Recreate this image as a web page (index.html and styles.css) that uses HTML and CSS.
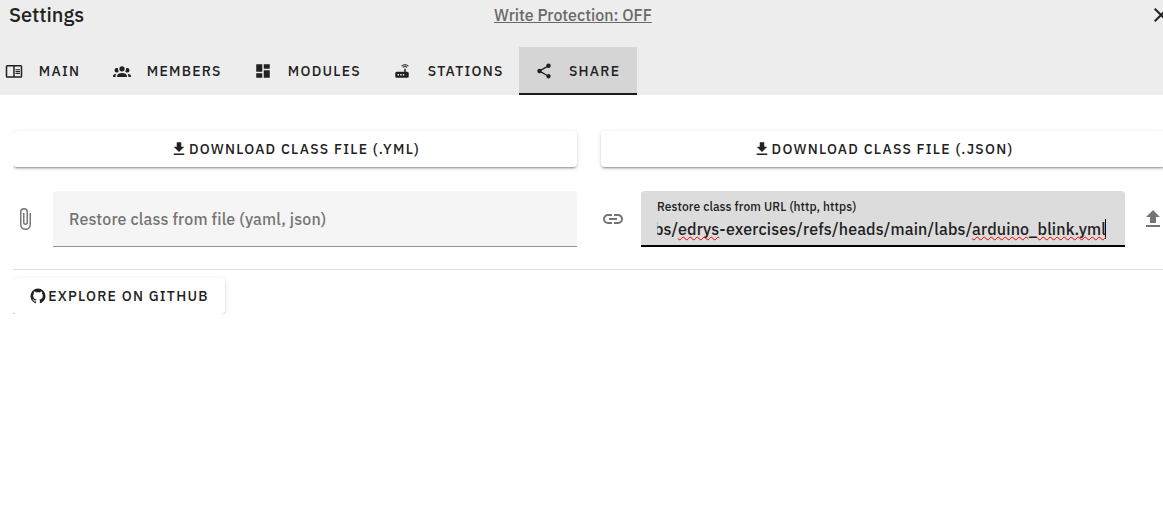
FILE: index.html
```html
<!DOCTYPE html>
<html lang="en">
<head>
<meta charset="utf-8">
<title>Settings</title>
<link rel="stylesheet" href="styles.css">
</head>
<body>
<header class="header">
  <div class="titlebar">
    <h1 class="title">Settings</h1>
    <a class="protection">Write Protection: OFF</a>
    <svg class="icon close" viewBox="0 0 24 24"><path d="M19,6.41L17.59,5L12,10.59L6.41,5L5,6.41L10.59,12L5,17.59L6.41,19L12,13.41L17.59,19L19,17.59L13.41,12L19,6.41Z"/></svg>
  </div>
  <nav class="tabs">
    <div class="tab tab-main"><svg class="icon small" viewBox="0 0 24 24"><path fill-rule="evenodd" d="M21,4H3A2,2 0 0,0 1,6V19A2,2 0 0,0 3,21H21A2,2 0 0,0 23,19V6A2,2 0 0,0 21,4M3,6H11V19H3ZM13,6H21V19H13ZM14,9.5H20V11H14ZM14,12H20V13.5H14ZM14,14.5H20V16H14Z"/></svg><span>MAIN</span></div>
    <div class="tab tab-members"><svg class="icon small" viewBox="0 0 24 24"><path d="M12,5.5A3.5,3.5 0 0,1 15.5,9A3.5,3.5 0 0,1 12,12.5A3.5,3.5 0 0,1 8.5,9A3.5,3.5 0 0,1 12,5.5M5,8C5.56,8 6.08,8.15 6.53,8.42C6.38,9.85 6.8,11.27 7.66,12.38C7.16,13.34 6.16,14 5,14A3,3 0 0,1 2,11A3,3 0 0,1 5,8M19,8A3,3 0 0,1 22,11A3,3 0 0,1 19,14C17.84,14 16.84,13.34 16.34,12.38C17.2,11.27 17.62,9.85 17.47,8.42C17.92,8.15 18.44,8 19,8M5.5,18.25C5.5,16.18 8.41,14.5 12,14.5C15.59,14.5 18.5,16.18 18.5,18.25V20H5.5V18.25M0,20V18.5C0,17.11 1.89,15.94 4.45,15.6C3.86,16.28 3.5,17.22 3.5,18.25V20H0M24,20H20.5V18.25C20.5,17.22 20.14,16.28 19.55,15.6C22.11,15.94 24,17.11 24,18.5V20Z"/></svg><span>MEMBERS</span></div>
    <div class="tab tab-modules"><svg class="icon small" viewBox="0 0 24 24"><path d="M13,3V9H21V3M13,21H21V11H13M3,21H11V15H3M3,13H11V3H3V13Z"/></svg><span>MODULES</span></div>
    <div class="tab tab-stations"><svg class="icon small" viewBox="0 0 24 24"><path d="M20.2,5.9L21,5.1C19.6,3.7 17.8,3 16,3C14.2,3 12.4,3.7 11,5.1L11.8,5.9C13,4.8 14.5,4.2 16,4.2C17.5,4.2 19,4.8 20.2,5.9M19.3,6.7C18.4,5.8 17.2,5.3 16,5.3C14.8,5.3 13.6,5.8 12.7,6.7L13.5,7.5C14.2,6.8 15.1,6.5 16,6.5C16.9,6.5 17.8,6.8 18.5,7.5L19.3,6.7M19,13H17V9H15V13H5A2,2 0 0,0 3,15V19A2,2 0 0,0 5,21H19A2,2 0 0,0 21,19V15A2,2 0 0,0 19,13M8,18H6V16H8V18M11.5,18H9.5V16H11.5V18M15,18H13V16H15V18Z"/></svg><span>STATIONS</span></div>
    <div class="tab tab-share active"><svg class="icon small" viewBox="0 0 24 24"><path d="M18,16.08C17.24,16.08 16.56,16.38 16.04,16.85L8.91,12.7C8.96,12.47 9,12.24 9,12C9,11.76 8.96,11.53 8.91,11.3L15.96,7.19C16.5,7.69 17.21,8 18,8A3,3 0 0,0 21,5A3,3 0 0,0 18,2A3,3 0 0,0 15,5C15,5.24 15.04,5.47 15.09,5.7L8.04,9.81C7.5,9.31 6.79,9 6,9A3,3 0 0,0 3,12A3,3 0 0,0 6,15C6.79,15 7.5,14.69 8.04,14.19L15.16,18.34C15.11,18.55 15.08,18.77 15.08,19C15.08,20.61 16.39,21.91 18,21.91C19.61,21.91 20.92,20.61 20.92,19A2.92,2.92 0 0,0 18,16.08Z"/></svg><span>SHARE</span></div>
  </nav>
</header>
<main class="content">
  <div class="row downloads">
    <button class="btn"><svg class="icon small" viewBox="0 0 24 24"><path d="M5,20H19V18H5M19,9H15V3H9V9H5L12,16L19,9Z"/></svg><span>DOWNLOAD CLASS FILE (.YML)</span></button>
    <button class="btn"><svg class="icon small" viewBox="0 0 24 24"><path d="M5,20H19V18H5M19,9H15V3H9V9H5L12,16L19,9Z"/></svg><span>DOWNLOAD CLASS FILE (.JSON)</span></button>
  </div>
  <div class="row restore">
    <div class="source">
      <svg class="icon muted" viewBox="0 0 24 24"><path d="M16.5,6V17.5A4,4 0 0,1 12.5,21.5A4,4 0 0,1 8.5,17.5V5A2.5,2.5 0 0,1 11,2.5A2.5,2.5 0 0,1 13.5,5V15.5A1,1 0 0,1 12.5,16.5A1,1 0 0,1 11.5,15.5V6H10V15.5A2.5,2.5 0 0,0 12.5,18A2.5,2.5 0 0,0 15,15.5V5A4,4 0 0,0 11,1A4,4 0 0,0 7,5V17.5A5.5,5.5 0 0,0 12.5,23A5.5,5.5 0 0,0 18,17.5V6H16.5Z"/></svg>
      <div class="field"><span class="placeholder">Restore class from file (yaml, json)</span></div>
    </div>
    <div class="source">
      <svg class="icon muted" viewBox="0 0 24 24"><path d="M3.9,12C3.9,10.29 5.29,8.9 7,8.9H11V7H7A5,5 0 0,0 2,12A5,5 0 0,0 7,17H11V15.1H7C5.29,15.1 3.9,13.71 3.9,12M8,13H16V11H8V13M17,7H13V8.9H17C18.71,8.9 20.1,10.29 20.1,12C20.1,13.71 18.71,15.1 17,15.1H13V17H17A5,5 0 0,0 22,12A5,5 0 0,0 17,7Z"/></svg>
      <div class="field focused">
        <span class="label">Restore class from URL (http, https)</span>
        <div class="value"><span class="url">bs/<span class="typo">edrys</span>-exercises/refs/heads/main/labs/<span class="typo">arduino</span>_<span class="typo">blink.yml</span></span></div>
      </div>
      <svg class="icon muted" viewBox="0 0 24 24"><path d="M9,16V10H5L12,3L19,10H15V16H9M5,20V18H19V20H5Z"/></svg>
    </div>
  </div>
  <hr class="divider">
  <button class="btn github"><svg class="icon small" viewBox="0 0 24 24"><path d="M12,2A10,10 0 0,0 2,12C2,16.42 4.87,20.17 8.84,21.5C9.34,21.58 9.5,21.27 9.5,21C9.5,20.77 9.5,20.14 9.5,19.31C6.73,19.91 6.14,17.97 6.14,17.97C5.68,16.81 5.03,16.5 5.03,16.5C4.12,15.88 5.1,15.9 5.1,15.9C6.1,15.97 6.63,16.93 6.63,16.93C7.5,18.45 8.97,18 9.54,17.76C9.63,17.11 9.89,16.67 10.17,16.42C7.95,16.17 5.62,15.31 5.62,11.5C5.62,10.39 6,9.5 6.65,8.79C6.55,8.54 6.2,7.5 6.75,6.15C6.75,6.15 7.59,5.88 9.5,7.17C10.29,6.95 11.15,6.84 12,6.84C12.85,6.84 13.71,6.95 14.5,7.17C16.41,5.88 17.25,6.15 17.25,6.15C17.8,7.5 17.45,8.54 17.35,8.79C18,9.5 18.38,10.39 18.38,11.5C18.38,15.32 16.04,16.16 13.81,16.41C14.17,16.72 14.5,17.33 14.5,18.26C14.5,19.6 14.5,20.68 14.5,21C14.5,21.27 14.66,21.59 15.17,21.5C19.14,20.16 22,16.42 22,12A10,10 0 0,0 12,2Z"/></svg><span>EXPLORE ON GITHUB</span></button>
</main>
</body>
</html>
```
FILE: styles.css
```css
* { box-sizing: border-box; }
body {
  margin: 0;
  height: 524px;
  overflow: hidden;
  background: #fff;
  color: #212121;
  font-family: "IBM Plex Sans", Roboto, sans-serif;
  font-weight: 500;
}
.icon { width: 24px; height: 24px; flex: none; fill: currentColor; }
.small { width: 18px; height: 18px; }
.muted { color: #757575; margin-top: 16px; }
.header { height: 95px; background: #ededed; overflow: hidden; }
.titlebar {
  display: grid;
  grid-template-columns: 485px 655px 24px;
  height: 47px;
  padding-left: 9px;
  align-items: start;
}
.title { margin: 0; font-size: 20px; line-height: 30px; font-weight: 500; }
.protection { font-size: 16px; line-height: 31px; color: #696969; text-decoration: underline; white-space: nowrap; }
.close { margin-top: 3px; }
.tabs { display: flex; height: 48px; margin-left: -12px; }
.tab {
  display: flex;
  flex: none;
  align-items: center;
  gap: 16px;
  padding-left: 16px;
  font-size: 14px;
  letter-spacing: 1.25px;
}
.tab-main { width: 108.8px; padding-left: 16.8px; }
.tab-members { width: 141px; }
.tab-modules { width: 140px; }
.tab-stations { width: 141.2px; padding-left: 15.6px; gap: 16.4px; }
.tab-share { width: 118px; }
.active { background: #d5d5d5; box-shadow: inset 0 -2px #1a1a1a; }
.content { margin-left: 13px; padding-top: 30px; height: 219px; overflow: hidden; }
.row { display: grid; grid-template-columns: 564px 564px; gap: 24px; }
.downloads { padding-top: 6px; }
.btn {
  display: flex;
  align-items: center;
  justify-content: center;
  gap: 1px;
  height: 36px;
  padding: 0;
  border: 0;
  border-radius: 4px;
  background: #fff;
  color: #212121;
  font: inherit;
  font-size: 14px;
  letter-spacing: 1.25px;
  white-space: nowrap;
  box-shadow: 0 3px 1px -2px rgba(0,0,0,.2), 0 2px 2px rgba(0,0,0,.14), 0 1px 5px rgba(0,0,0,.12);
}
.restore { margin-top: 24px; }
.source { display: flex; gap: 16px; }
.field {
  flex: 1;
  height: 56px;
  padding: 0 16px;
  border-radius: 4px 4px 0 0;
  border-bottom: 1px solid #959595;
  background: #f5f5f5;
  min-width: 0;
  letter-spacing: 0.15px;
}
.placeholder { color: #757575; font-size: 16px; line-height: 56px; white-space: nowrap; }
.focused { flex: 0 0 484px; background: #dcdcdc; border-bottom: 2px solid #000; padding-top: 8px; }
.label { display: block; font-size: 12px; line-height: 16px; white-space: nowrap; letter-spacing: 0.11px; }
.value {
  display: flex;
  justify-content: flex-end;
  width: 450px;
  height: 29px;
  overflow: hidden;
  font-size: 16px;
  line-height: 28px;
  white-space: nowrap;
}
.url { background: linear-gradient(#000, #000) right 1px top 4px / 1px 20px no-repeat; padding-right: 1px; }
.typo { text-decoration: underline wavy #f00 1.3px; text-underline-offset: 1px; text-decoration-skip-ink: none; }
.divider { margin: 22px 0 8px; border: 0; border-top: 1px solid #e0e0e0; }
.github { width: 212px; }
```
